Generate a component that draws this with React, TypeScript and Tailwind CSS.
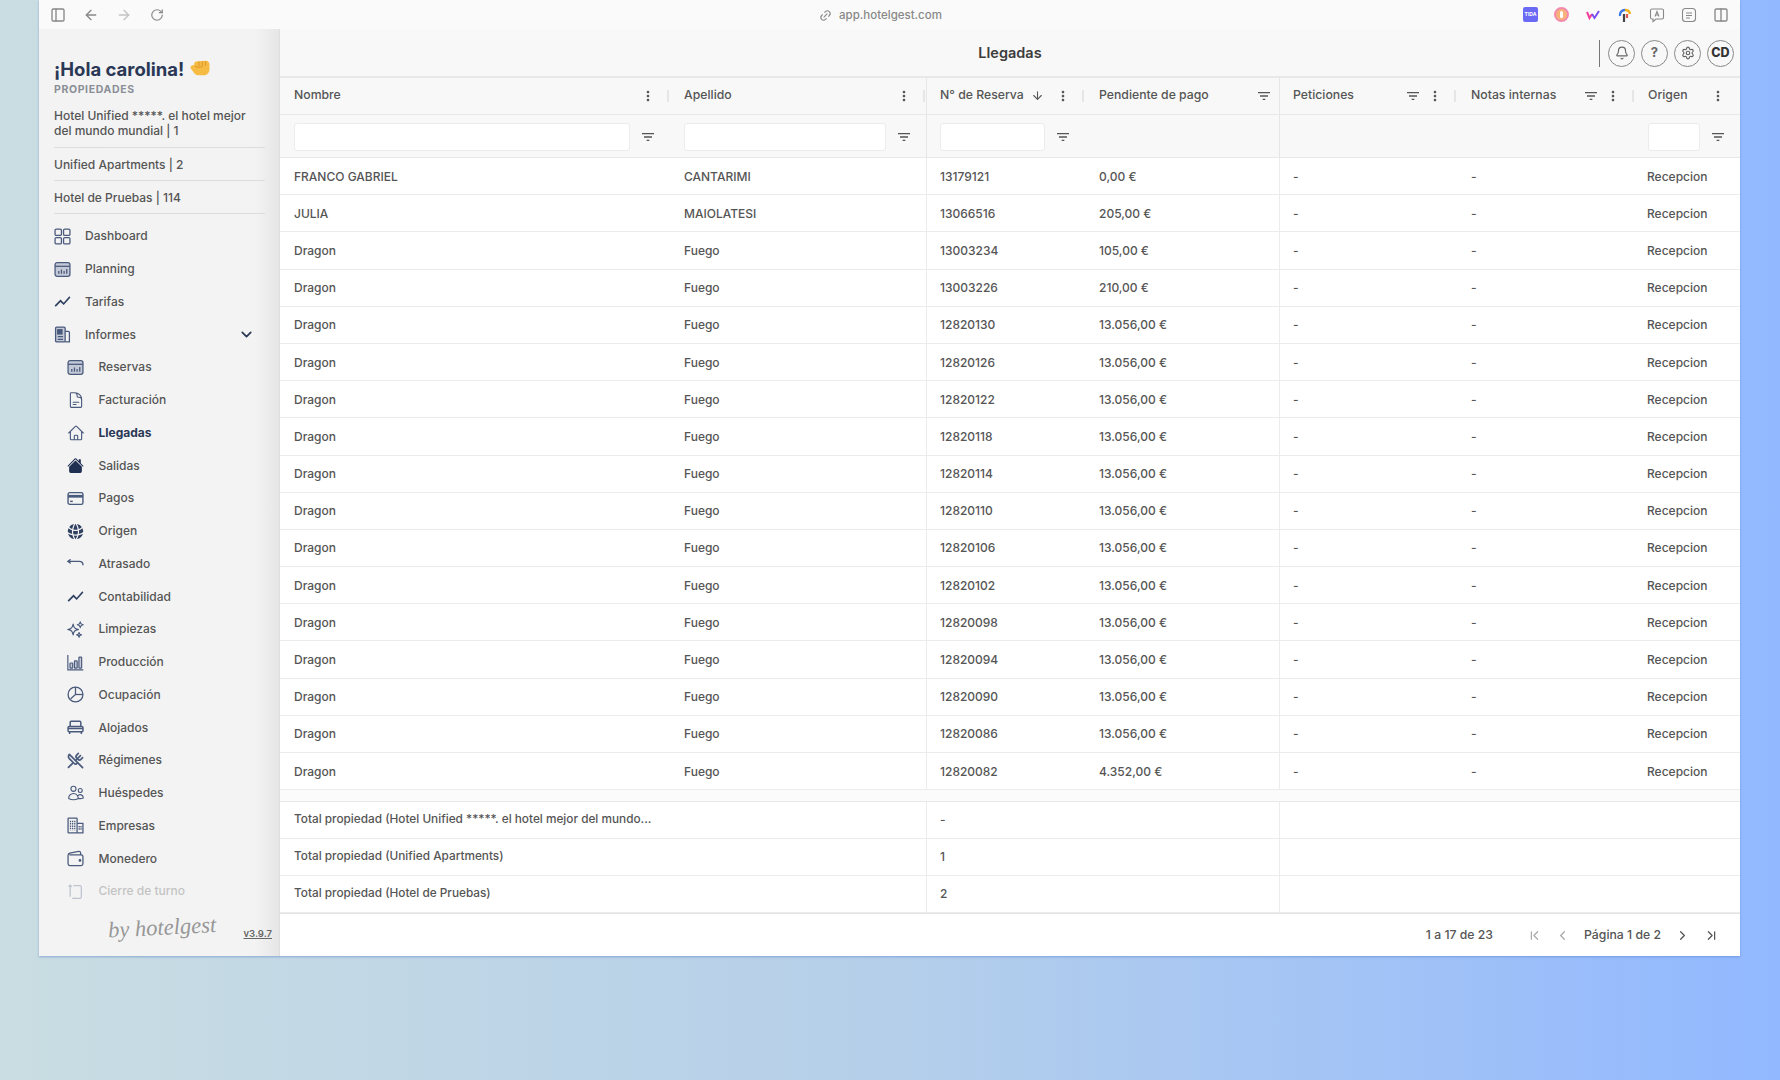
import React from 'react';
import {
  ArrowDown, ArrowLeft, ArrowRight, Bell, ChevronDown, ChevronFirst, ChevronLast, ChevronLeft, ChevronRight,
  Link2, PanelLeft, RotateCw, Settings, UtensilsCrossed, Columns2,
} from 'lucide-react';
import { HiOutlineDocumentText, HiOutlineSparkles, HiOutlineHome, HiOutlineUsers, HiGlobeAlt } from 'react-icons/hi2';
import { MdFilterList, MdMoreVert, MdShowChart } from 'react-icons/md';
import { BsHouseFill } from 'react-icons/bs';

const iconClass = 'w-[17px] h-[17px] text-[#4a5a7c]';

const GridIcon = () => (
  <svg viewBox="0 0 16 16" className={iconClass} fill="none" stroke="currentColor" strokeWidth="1.2">
    <rect x="1" y="1" width="6" height="6" rx="1.2" />
    <rect x="9" y="1" width="6" height="6" rx="1.2" />
    <rect x="1" y="9" width="6" height="6" rx="1.2" />
    <rect x="9" y="9" width="6" height="6" rx="1.2" />
  </svg>
);

const CalendarIcon = () => (
  <svg viewBox="0 0 16 16" className={iconClass}>
    <rect x="1" y="1.5" width="14" height="13" rx="2" fill="#c3c9d6" stroke="currentColor" strokeWidth="1.2" />
    <path d="M1 5h14" stroke="currentColor" strokeWidth="1.2" />
    <path d="M4.5 12V9.5M7 12V8M9.5 12V9.5M12 12V7.5" stroke="currentColor" strokeWidth="1.2" />
  </svg>
);

const ReportIcon = () => (
  <svg viewBox="0 0 16 16" className={iconClass} fill="none" stroke="currentColor" strokeWidth="1.2">
    <rect x="1.5" y="1" width="9" height="14" rx="1" fill="#c3c9d6" />
    <path d="M10.5 5h3a1 1 0 0 1 1 1v9h-4" />
    <rect x="3.5" y="3.5" width="4" height="4" fill="currentColor" />
    <path d="M3.5 10h5M3.5 12.5h5" />
  </svg>
);

const CardIcon = () => (
  <svg viewBox="0 0 16 16" className={iconClass}>
    <rect x="1" y="2.5" width="14" height="11" rx="1.6" fill="none" stroke="currentColor" strokeWidth="1.3" />
    <rect x="1" y="4.6" width="14" height="2.6" fill="currentColor" />
    <rect x="3" y="10" width="2.4" height="1.4" fill="currentColor" />
  </svg>
);

const BackIcon = () => (
  <svg viewBox="0 0 16 16" className={iconClass} fill="none" stroke="currentColor" strokeWidth="1.3" strokeLinecap="round">
    <path d="M1 6h10.5c2 0 3.5 1.2 3.5 3.2" />
    <path d="M3 4.4 1 6l2 1.6" />
  </svg>
);

const BarsIcon = () => (
  <svg viewBox="0 0 16 16" className={iconClass} fill="none" stroke="currentColor" strokeWidth="1.1">
    <path d="M.8 1v14h14.6" />
    <rect x="2.8" y="8.5" width="2.6" height="4.8" rx=".6" fill="#c3c9d6" />
    <rect x="7" y="6.5" width="2.6" height="6.8" rx=".6" fill="#c3c9d6" />
    <rect x="11.2" y="3" width="2.6" height="10.3" rx=".6" fill="#c3c9d6" />
  </svg>
);

const PieIcon = () => (
  <svg viewBox="0 0 16 16" className={iconClass} fill="none" stroke="currentColor" strokeWidth="1.2">
    <circle cx="8" cy="8" r="7" />
    <path d="M8 1v7l-4.5 4" />
    <path d="M8 8h7" />
  </svg>
);

const BedIcon = () => (
  <svg viewBox="0 0 16 16" className={iconClass} fill="none" stroke="currentColor" strokeWidth="1.4">
    <path d="M3 7V3.2A1 1 0 0 1 4 2.2h8a1 1 0 0 1 1 1V7" />
    <rect x="1" y="7" width="14" height="5" rx="1" />
    <path d="M2.5 12v2M13.5 12v2M1 9h14" />
  </svg>
);

const BuildingIcon = () => (
  <svg viewBox="0 0 16 16" className={iconClass} fill="none" stroke="currentColor" strokeWidth="1.2">
    <rect x="1" y="1" width="8.5" height="14" rx=".6" />
    <path d="M9.5 6H15v9H9.5" />
    <path d="M3.3 3.5v9M5.3 3.5v9M7.3 3.5v9" strokeDasharray="1.4 .8" />
    <path d="M11.5 8.5v4M13.2 8.5v4" strokeDasharray="1.4 .8" />
  </svg>
);

const WalletIcon = () => (
  <svg viewBox="0 0 16 16" className={iconClass} fill="none" stroke="currentColor" strokeWidth="1.2">
    <path d="M1 5v8a1.6 1.6 0 0 0 1.6 1.6h10.8A1.6 1.6 0 0 0 15 13V6.2a1.6 1.6 0 0 0-1.6-1.6H2.2" />
    <path d="M1 5c0-1 .6-1.6 1.6-2l8.4-1.6c1-.2 1.8.4 1.8 1.4v1.8" />
    <circle cx="12.2" cy="9.8" r=".7" fill="currentColor" />
  </svg>
);

const ShiftIcon = () => (
  <svg viewBox="0 0 16 16" className={iconClass} fill="none" stroke="currentColor" strokeWidth="1.2">
    <path d="M6 2.5h6a1.5 1.5 0 0 1 1.5 1.5v9a1.5 1.5 0 0 1-1.5 1.5H6" />
    <path d="M3 2v11M1.5 3.5 3 2l1.5 1.5" />
    <path d="M7 14.5H5" />
  </svg>
);

const Fist = () => (
  <svg viewBox="0 0 20 16" className="w-[20px] h-[16px] -mt-[3px]">
    <path d="M6 1.6 15.5.8c2.4-.2 4 1.4 4 3.6v4.8c0 3.4-2.4 6-5.6 6H8.4c-2.4 0-4.2-1.2-5-3.2L.8 8.6C0 7 .8 5.4 2.4 5.2L4 5c.2-1.8.8-3.2 2-3.4z" fill="#f6bb42" />
    <path d="M9 1.4v4.4M12.2 1.2v4.6M15.4 1v4.8M5 6.2c2.4 1.4 5.4 1.2 7.6.2" fill="none" stroke="#dd952a" strokeWidth="1" />
  </svg>
);

const properties = [
  'Hotel Unified *****. el hotel mejor del mundo mundial | 1',
  'Unified Apartments | 2',
  'Hotel de Pruebas | 114',
];

const mainMenu = [
  { label: 'Dashboard', icon: <GridIcon /> },
  { label: 'Planning', icon: <CalendarIcon /> },
  { label: 'Tarifas', icon: <MdShowChart className="w-[19px] h-[19px] text-[#2f3f60] -ml-px" /> },
];

const subMenu = [
  { label: 'Reservas', icon: <CalendarIcon /> },
  { label: 'Facturación', icon: <HiOutlineDocumentText className="w-[18px] h-[18px] text-[#4a5a7c]" /> },
  { label: 'Llegadas', icon: <HiOutlineHome className="w-[18px] h-[18px] text-[#4a5a7c]" />, active: true },
  { label: 'Salidas', icon: <BsHouseFill className="w-[17px] h-[17px] text-[#1f2f52]" /> },
  { label: 'Pagos', icon: <CardIcon /> },
  { label: 'Origen', icon: <HiGlobeAlt className="w-[19px] h-[19px] text-[#2f3f60] -ml-px" /> },
  { label: 'Atrasado', icon: <BackIcon /> },
  { label: 'Contabilidad', icon: <MdShowChart className="w-[19px] h-[19px] text-[#2f3f60] -ml-px" /> },
  { label: 'Limpiezas', icon: <HiOutlineSparkles className="w-[19px] h-[19px] text-[#4a5a7c] -ml-px" /> },
  { label: 'Producción', icon: <BarsIcon /> },
  { label: 'Ocupación', icon: <PieIcon /> },
  { label: 'Alojados', icon: <BedIcon /> },
  { label: 'Régimenes', icon: <UtensilsCrossed className={iconClass} strokeWidth={2.4} /> },
  { label: 'Huéspedes', icon: <HiOutlineUsers className="w-[18px] h-[18px] text-[#4a5a7c]" /> },
  { label: 'Empresas', icon: <BuildingIcon /> },
  { label: 'Monedero', icon: <WalletIcon /> },
];

const rows = [
  ['FRANCO GABRIEL', 'CANTARIMI', '13179121', '0,00 €'],
  ['JULIA', 'MAIOLATESI', '13066516', '205,00 €'],
  ['Dragon', 'Fuego', '13003234', '105,00 €'],
  ['Dragon', 'Fuego', '13003226', '210,00 €'],
  ['Dragon', 'Fuego', '12820130', '13.056,00 €'],
  ['Dragon', 'Fuego', '12820126', '13.056,00 €'],
  ['Dragon', 'Fuego', '12820122', '13.056,00 €'],
  ['Dragon', 'Fuego', '12820118', '13.056,00 €'],
  ['Dragon', 'Fuego', '12820114', '13.056,00 €'],
  ['Dragon', 'Fuego', '12820110', '13.056,00 €'],
  ['Dragon', 'Fuego', '12820106', '13.056,00 €'],
  ['Dragon', 'Fuego', '12820102', '13.056,00 €'],
  ['Dragon', 'Fuego', '12820098', '13.056,00 €'],
  ['Dragon', 'Fuego', '12820094', '13.056,00 €'],
  ['Dragon', 'Fuego', '12820090', '13.056,00 €'],
  ['Dragon', 'Fuego', '12820086', '13.056,00 €'],
  ['Dragon', 'Fuego', '12820082', '4.352,00 €'],
];

const totals = [
  ['Total propiedad (Hotel Unified *****. el hotel mejor del mundo...', '-'],
  ['Total propiedad (Unified Apartments)', '1'],
  ['Total propiedad (Hotel de Pruebas)', '2'],
];

const gridCols = 'grid grid-cols-[390px_256px_159px_194px_178px_178px_105px]';

const FilterIcon = () => <MdFilterList className="w-4 h-4 text-[#555] shrink-0" />;
const DotsIcon = () => <MdMoreVert className="w-4 h-4 text-[#555] shrink-0" />;
const Separator = () => <span className="w-[2px] h-3 bg-[#e6e6e6] mx-[1px] shrink-0" />;

const HeaderCell = ({ label, sort, filter, dots = true, line, last, tight }: { label: string; sort?: boolean; filter?: boolean; dots?: boolean; line?: boolean; last?: boolean; tight?: boolean }) => (
  <div className={`flex items-center pb-[1px] ${line || tight ? 'pl-[13px]' : 'pl-[14px]'} ${line ? 'border-l border-[#e6e6e6]' : ''}`}>
    <span className="font-medium text-[#555]">{label}</span>
    {sort && <ArrowDown className="w-[13px] h-[13px] ml-[7px] text-[#555]" />}
    <span className="flex-1" />
    {filter && <span className={dots ? 'mr-[6px]' : 'mr-[7px]'}><FilterIcon /></span>}
    {dots && <DotsIcon />}
    {dots && <span className={last ? 'w-[14px]' : 'w-[10px]'} />}
    {dots && !last && <Separator />}
  </div>
);

const FilterCell = ({ line, tight }: { line?: boolean; tight?: boolean }) => (
  <div className={`flex items-center pr-[14px] pt-[1px] ${line || tight ? 'pl-[13px]' : 'pl-[14px]'} ${line ? 'border-l border-[#e6e6e6]' : ''}`}>
    <div className="flex-1 h-[28px] bg-white border border-[#ececec] rounded-[3px]" />
    <span className="ml-[10px]"><FilterIcon /></span>
  </div>
);

const Cell = ({ children, line, tight }: { children: React.ReactNode; line?: boolean; tight?: boolean }) => (
  <div className={`flex items-center pt-[1px] ${tight ? 'pl-[12px]' : line ? 'pl-[13px]' : 'pl-[14px]'} ${line ? 'border-l border-[#ececec]' : ''}`}>{children}</div>
);

const NavItem = ({ label, icon, active, sub }: { label: string; icon: React.ReactNode; active?: boolean; sub?: boolean }) => (
  <div className={`flex items-center h-[32.75px] ${sub ? 'pl-[13px]' : ''}`}>
    <span className={`${sub ? 'w-[31.5px]' : 'w-[31px]'} flex items-center shrink-0`}>{icon}</span>
    <span className={`text-[12px] ${active ? 'font-bold text-[#2a3856]' : 'font-medium text-[#555]'}`}>{label}</span>
  </div>
);

const RoundButton = ({ children }: { children: React.ReactNode }) => (
  <div className="w-[27px] h-[27px] rounded-full border-[1.5px] border-[#888] flex items-center justify-center text-[#666]">{children}</div>
);

const BrowserBar = () => (
  <div className="h-[29px] bg-[#fafafa] grid grid-cols-[1fr_auto_1fr] items-center text-[#888] shrink-0">
    <div className="flex items-center pl-[11px] gap-[17px]">
      <PanelLeft className="w-4 h-4" />
      <ArrowLeft className="w-4 h-4" />
      <ArrowRight className="w-4 h-4 text-[#c4c4c4]" />
      <RotateCw className="w-[14px] h-[14px] ml-[1px]" />
    </div>
    <div className="flex items-center gap-[7px] text-[11.5px] font-medium mr-[18px] pt-[2px]">
      <Link2 className="w-[13px] h-[13px] -rotate-45" />
      app.hotelgest.com
    </div>
    <div className="flex items-center justify-end gap-[16px] pr-[11px]">
      <span className="w-[15px] h-[15px] rounded-[2px] bg-[#6a6af4] text-white text-[5px] flex items-center justify-center font-bold">TIDA</span>
      <span className="w-[15px] h-[15px] rounded-full bg-[#f9b27a] border-2 border-[#f28ab0] flex items-center justify-center">
        <span className="w-[3px] h-[7px] bg-white rounded-full" />
      </span>
      <svg viewBox="0 0 16 16" className="w-4 h-4">
        <path d="M2 5l2.5 6L7 7" fill="none" stroke="#f0409a" strokeWidth="2" />
        <path d="M7 7l2.5 4L14 4" fill="none" stroke="#7a4df0" strokeWidth="2" />
      </svg>
      <svg viewBox="0 0 16 16" className="w-4 h-4">
        <path d="M3 9a5 5 0 0 1 5-6" fill="none" stroke="#3a78e8" strokeWidth="2.4" />
        <path d="M8 3a5 5 0 0 1 5 4" fill="none" stroke="#f3b21c" strokeWidth="2.4" />
        <path d="M7 7v8" stroke="#444" strokeWidth="2.2" />
        <path d="M10 7v4" stroke="#e2574c" strokeWidth="2.2" />
      </svg>
      <svg viewBox="0 0 16 16" className="w-4 h-4" fill="none" stroke="#888" strokeWidth="1.1">
        <path d="M3 2h10a1.5 1.5 0 0 1 1.5 1.5v7A1.5 1.5 0 0 1 13 12H7l-3 2.5V12H3a1.5 1.5 0 0 1-1.5-1.5v-7A1.5 1.5 0 0 1 3 2z" />
        <path d="M6 9.5 8 4.5l2 5M6.8 8h2.4" />
      </svg>
      <svg viewBox="0 0 16 16" className="w-4 h-4" fill="none" stroke="#888" strokeWidth="1.1">
        <rect x="1.5" y="1.5" width="13" height="13" rx="3" />
        <path d="M5 6h6M5 8.5h6M5 11h4" />
      </svg>
      <Columns2 className="w-4 h-4" />
    </div>
  </div>
);

const Sidebar = () => (
  <aside className="w-[240px] shrink-0 bg-gradient-to-r from-[#f3f3f3] from-[90%] to-[#e6e6e6] flex flex-col">
    <div className="pl-[15px] pr-[14px] pt-[28px]">
      <div className="flex items-center gap-[6px] h-[25px]">
        <h1 className="text-[18.5px] leading-none font-bold text-[#2a3856]">¡Hola carolina!</h1>
        <Fist />
      </div>
      <div className="text-[10.5px] font-bold tracking-[0.06em] text-[#8a8e96] mt-[1px] leading-[14px]">PROPIEDADES</div>
      <div className="mt-[4px]">
        {properties.map((p, i) => (
          <div key={p} className={`text-[12px] leading-[15px] text-[#555] font-medium border-b border-[#dcdcdc] ${i === 0 ? 'pt-[7px] pb-[9px]' : 'py-[9px] pb-[8px]'}`}>{p}</div>
        ))}
      </div>
      <div className="mt-[6px] h-[688px] overflow-hidden">
        {mainMenu.map((m) => <NavItem key={m.label} {...m} />)}
        <div className="flex items-center h-[32.75px]">
          <span className="w-[31px] flex items-center shrink-0"><ReportIcon /></span>
          <span className="text-[12px] font-medium text-[#555] flex-1">Informes</span>
          <ChevronDown className="w-[17px] h-[17px] text-[#2a3856] mr-[10px]" strokeWidth={2.4} />
        </div>
        {subMenu.map((m) => <NavItem key={m.label} {...m} sub />)}
        <div className="opacity-30"><NavItem label="Cierre de turno" icon={<ShiftIcon />} sub /></div>
      </div>
    </div>
    <div className="flex-1 flex items-center pl-[69px] pr-[7px]">
      <span className="flex-1 text-[22.5px] leading-none italic text-[#979797] font-['Liberation_Serif',serif] -rotate-3 -mt-[10px]">by hotelgest</span>
      <span className="text-[9.5px] font-semibold underline text-[#666] mt-[4px]">v3.9.7</span>
    </div>
  </aside>
);

const Main = () => (
  <main className="flex-1 min-w-0 bg-white flex flex-col text-[12px] border-l border-[#dedede]">
    <div className="h-[49px] bg-[#f8f8f8] border-b-2 border-[#e8e8e8] grid grid-cols-[1fr_auto_1fr] items-center shrink-0">
      <span />
      <span className="text-[14.5px] font-semibold text-[#3c3c3c]">Llegadas</span>
      <div className="flex items-center justify-end gap-[6px] pr-[6px] pt-[1px]">
        <span className="w-[1.5px] h-[27px] bg-[#777] mr-[2px]" />
        <RoundButton><Bell className="w-[14px] h-[14px]" /></RoundButton>
        <RoundButton><span className="font-bold text-[13px]">?</span></RoundButton>
        <RoundButton><Settings className="w-[14px] h-[14px]" /></RoundButton>
        <RoundButton><span className="font-extrabold text-[12.5px] text-[#333]">CD</span></RoundButton>
      </div>
    </div>
    <div className={`${gridCols} h-[37px] bg-[#f8f8f8] border-b border-[#e8e8e8] shrink-0 text-[12.25px]`}>
      <HeaderCell label="Nombre" />
      <HeaderCell label="Apellido" />
      <HeaderCell label="N° de Reserva" sort line />
      <HeaderCell label="Pendiente de pago" filter dots={false} />
      <HeaderCell label="Peticiones" filter line />
      <HeaderCell label="Notas internas" filter />
      <HeaderCell label="Origen" last tight />
    </div>
    <div className={`${gridCols} h-[43px] bg-[#f8f8f8] border-b border-[#e8e8e8] shrink-0`}>
      <FilterCell />
      <FilterCell />
      <FilterCell line />
      <div />
      <div className="border-l border-[#e6e6e6]" />
      <div />
      <FilterCell tight />
    </div>
    <div className="text-[#555] font-medium">
      {rows.map((r) => (
        <div key={r[2]} className={`${gridCols} h-[37.2px] border-b border-[#ececec]`}>
          <Cell>{r[0]}</Cell>
          <Cell>{r[1]}</Cell>
          <Cell line>{r[2]}</Cell>
          <Cell>{r[3]}</Cell>
          <Cell line>-</Cell>
          <Cell>-</Cell>
          <Cell tight>Recepcion</Cell>
        </div>
      ))}
      <div className="h-[12px] border-b border-[#e8e8e8] bg-[#fbfbfb]" />
      {totals.map((t) => (
        <div key={t[0]} className={`${gridCols} h-[37px] border-b border-[#ececec]`}>
          <div className="col-span-2 flex items-center pl-[14px] text-[11.8px]">{t[0]}</div>
          <div className="flex items-center pl-[13px] border-l border-[#ececec]">{t[1]}</div>
          <div />
          <div className="col-span-3 border-l border-[#ececec]" />
        </div>
      ))}
    </div>
    <div className="flex-1 flex items-center justify-end pr-[21px] text-[#555] font-medium border-t border-[#e4e4e4] text-[12.25px]">
      <span>1 a 17 de 23</span>
      <ChevronFirst className="w-[15px] h-[15px] ml-[34px] text-[#aaa]" />
      <ChevronLeft className="w-[15px] h-[15px] ml-[13px] text-[#aaa]" />
      <span className="ml-[14px]">Página 1 de 2</span>
      <ChevronRight className="w-[15px] h-[15px] ml-[14px]" />
      <ChevronLast className="w-[15px] h-[15px] ml-[14px]" />
    </div>
  </main>
);

export default function App() {
  return (
    <div className="w-[1780px] h-[1080px] overflow-hidden bg-gradient-to-r from-[#c9dde2] via-[#b5cfea] to-[#92b8ff] font-['Inter',sans-serif]">
      <div className="ml-[39px] w-[1701px] h-[956px] flex flex-col shadow-[0_1px_2px_rgba(80,120,200,0.5)]">
        <BrowserBar />
        <div className="flex-1 min-h-0 flex">
          <Sidebar />
          <Main />
        </div>
      </div>
    </div>
  );
}
